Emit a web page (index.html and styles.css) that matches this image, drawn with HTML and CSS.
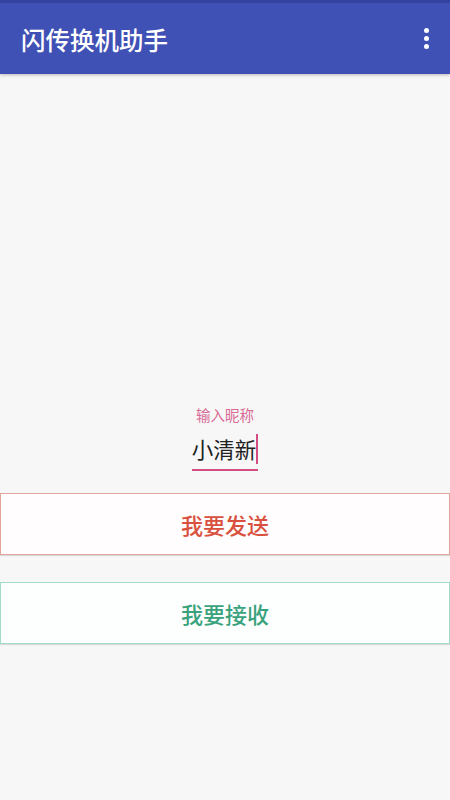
FILE: index.html
```html
<!DOCTYPE html>
<html lang="zh">
<head>
<meta charset="utf-8">
<link rel="stylesheet" href="styles.css">
</head>
<body>
<header class="appbar">
  <div class="status"></div>
  <div class="bar">
    <h1 class="title">闪传换机助手</h1>
    <div class="menu"><span></span><span></span><span></span></div>
  </div>
</header>
<main class="content">
  <div class="field">
    <div class="label">输入昵称</div>
    <div class="input"><span class="value">小清新</span><span class="cursor"></span></div>
  </div>
  <div class="actions">
    <button class="btn send">我要发送</button>
    <button class="btn receive">我要接收</button>
  </div>
</main>
</body>
</html>
```
FILE: styles.css
```css
html, body {
  margin: 0;
  padding: 0;
}
body {
  width: 450px;
  height: 800px;
  background: #f7f7f7;
  font-family: "Noto Sans CJK SC", "Noto Sans", sans-serif;
  overflow: hidden;
}
.appbar {
  background: #3f51b5;
  box-shadow: 0 1px 3px rgba(0,0,0,0.25);
}
.status {
  height: 3px;
  background: #3443a0;
}
.bar {
  height: 71px;
  display: flex;
  align-items: center;
  justify-content: space-between;
  padding: 0 21px 0 21px;
}
.title {
  margin: 0;
  color: #ffffff;
  font-size: 24.5px;
  font-weight: 500;
  line-height: 30px;
  margin-top: 2px;
}
.menu {
  display: flex;
  flex-direction: column;
  gap: 2.5px;
}
.menu span {
  display: block;
  width: 5.5px;
  height: 5.5px;
  border-radius: 50%;
  background: #ffffff;
}
.content {
  display: flex;
  flex-direction: column;
  align-items: center;
  padding-top: 331px;
}
.field {
  display: flex;
  flex-direction: column;
  align-items: center;
}
.label {
  color: #d86a95;
  font-size: 14.5px;
  line-height: 20px;
}
.input {
  margin-top: 8px;
  display: flex;
  align-items: center;
  border-bottom: 2px solid #d44d82;
  padding: 0 0 4px 0;
  height: 32px;
}
.value {
  color: #222222;
  font-size: 21.5px;
  line-height: 32px;
}
.cursor {
  display: block;
  width: 2px;
  height: 30px;
  background: #d44d82;
  margin-left: 0;
}
.actions {
  width: 100%;
  display: flex;
  flex-direction: column;
  gap: 27px;
  margin-top: 22px;
}
.btn {
  display: block;
  width: 450px;
  height: 62px;
  margin: 0;
  background: #ffffff;
  font-family: "Noto Sans CJK SC", "Noto Sans", sans-serif;
  font-size: 22px;
  font-weight: 500;
  padding: 0;
  box-sizing: border-box;
  box-shadow: 0 1px 1px rgba(0,0,0,0.12);
}
.send {
  color: #d9503f;
  border: 1px solid #e2a59c;
  background: #fffdfd;
}
.receive {
  color: #3aa27c;
  border: 1px solid #a4dcca;
  background: #fdfefe;
}
```
